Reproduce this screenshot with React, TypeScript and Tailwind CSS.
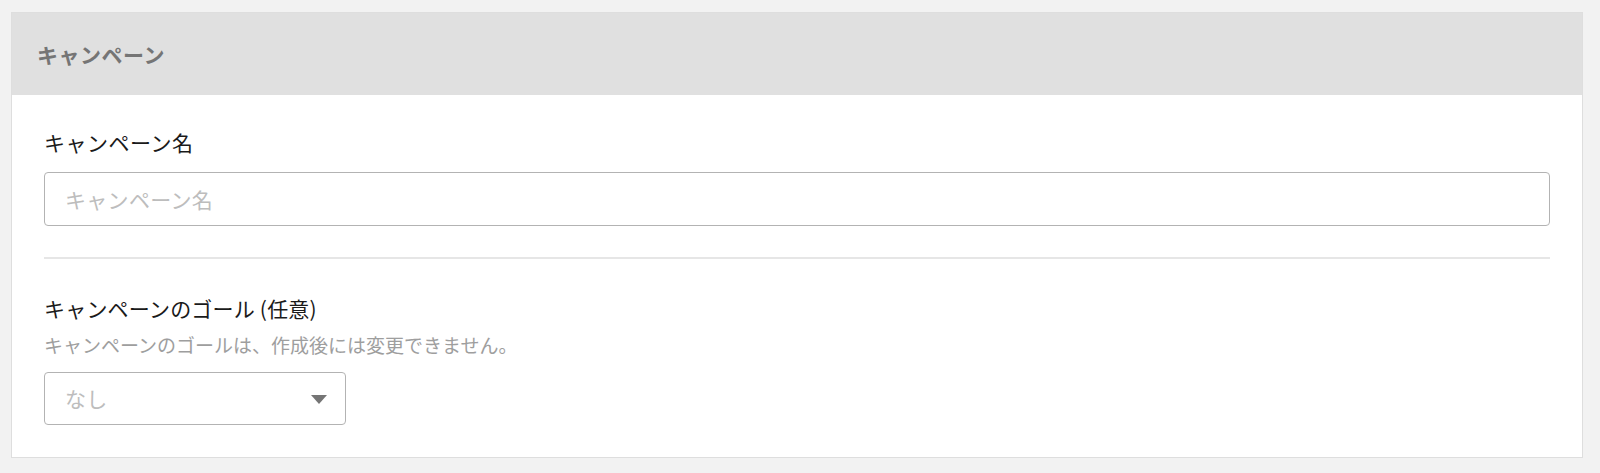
import React from 'react';

const font = { fontFamily: '"Noto Sans CJK JP", "Noto Sans", sans-serif' };

export default function App() {
  return (
    <div className="min-h-[473px] w-[1600px] bg-[#f2f2f2] pt-[12px]" style={font}>
      <section className="ml-[11px] w-[1572px] border border-[#dedede] bg-white">
        {/* header */}
        <div className="flex h-[82px] items-center bg-[#e0e0e0] px-[25px]">
          <h2 className="text-[21px] font-bold leading-none tracking-[0.5px] text-[#757575]">キャンペーン</h2>
        </div>

        <div className="flex flex-col px-[32px] pb-[32px] pt-[32px]">
          <label className="text-[21px] leading-[30px] tracking-[0.5px] text-[#1a1a1a]">キャンペーン名</label>
          <input
            placeholder="キャンペーン名"
            className="mt-[15px] h-[54px] w-full rounded-[4px] border border-[#b3b3b3] px-[20px] text-[21px] tracking-[0.3px] text-[#1a1a1a] outline-none placeholder:text-[#bdbdbd]"
            style={font}
          />

          <div className="mt-[31px] h-[2px] bg-[#e6e6e6]" />

          <label className="mt-[34px] text-[21px] leading-[30px] tracking-[0.2px] text-[#1a1a1a]">キャンペーンのゴール (任意)</label>
          <p className="mt-[9px] text-[19px] leading-[26px] text-[#9e9e9e]">
            キャンペーンのゴールは、作成後には変更できません。
          </p>

          <button
            type="button"
            className="mt-[14px] flex h-[53px] w-[302px] items-center justify-between rounded-[4px] border border-[#b3b3b3] bg-white pl-[20px] pr-[18px] text-left"
          >
            <span className="text-[21px] tracking-[0.3px] text-[#bdbdbd]">なし</span>
            <svg width="16" height="9" viewBox="0 0 16 9" className="mt-[2px]">
              <path d="M0 0h16L8 9z" fill="#757575" />
            </svg>
          </button>
        </div>
      </section>
    </div>
  );
}
